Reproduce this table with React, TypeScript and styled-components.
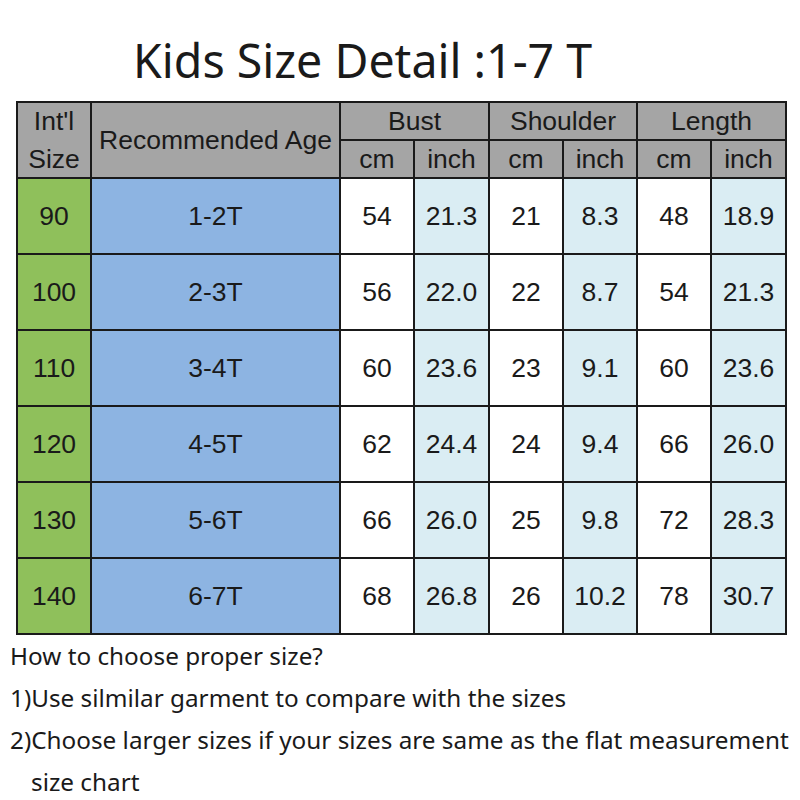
import React from "react";
import styled, { createGlobalStyle } from "styled-components";

const Global = createGlobalStyle`
  html, body { margin: 0; padding: 0; background: #fff; }
  body { width: 800px; height: 800px; overflow: hidden; }
`;

const Page = styled.div`
  width: 800px;
  height: 800px;
  display: flex;
  flex-direction: column;
  background: #fff;
  overflow: hidden;
`;

const Title = styled.h1`
  margin: 0;
  padding: 28px 0 0 133px;
  height: 101px;
  flex: 0 0 101px;
  box-sizing: border-box;
  font-family: "Noto Sans", "Open Sans", sans-serif;
  font-weight: 400;
  font-size: 46.5px;
  line-height: 64px;
  color: #1a1a1a;
  white-space: nowrap;
`;

const Table = styled.div`
  margin-left: 16px;
  width: 771px;
  flex: 0 0 auto;
  display: grid;
  grid-template-columns: 72px 247px 72px 73px 72px 72px 72px 73px;
  grid-template-rows: 36px 36px repeat(6, 74px);
  gap: 2px;
  padding: 2px;
  box-sizing: border-box;
  background: #1a1a1a;
  font-family: "Liberation Sans", Arial, sans-serif;
  font-size: 26.5px;
  color: #1a1a1a;
`;

type Tone = "head" | "size" | "age" | "plain" | "inch";

const tones: Record<Tone, string> = {
  head: "#a5a5a5",
  size: "#8fc05b",
  age: "#8db4e2",
  plain: "#ffffff",
  inch: "#daedf3",
};

const Cell = styled.div<{ $tone: Tone; $col?: string; $row?: string }>`
  background: ${(p) => tones[p.$tone]};
  grid-column: ${(p) => p.$col ?? "auto"};
  grid-row: ${(p) => p.$row ?? "auto"};
  display: flex;
  align-items: center;
  justify-content: center;
  text-align: center;
  line-height: 38px;
  white-space: nowrap;
`;

const Stack = styled.span`
  display: flex;
  flex-direction: column;
  align-items: center;
  line-height: 38px;
`;

const Notes = styled.div`
  padding: 0 0 0 10px;
  font-family: "Noto Sans", "Open Sans", sans-serif;
  font-size: 24.3px;
  line-height: 42px;
  color: #1a1a1a;
  white-space: nowrap;
`;

const Line = styled.div<{ $indent?: boolean }>`
  padding-left: ${(p) => (p.$indent ? "21px" : "0")};
`;

const rows = [
  ["90", "1-2T", "54", "21.3", "21", "8.3", "48", "18.9"],
  ["100", "2-3T", "56", "22.0", "22", "8.7", "54", "21.3"],
  ["110", "3-4T", "60", "23.6", "23", "9.1", "60", "23.6"],
  ["120", "4-5T", "62", "24.4", "24", "9.4", "66", "26.0"],
  ["130", "5-6T", "66", "26.0", "25", "9.8", "72", "28.3"],
  ["140", "6-7T", "68", "26.8", "26", "10.2", "78", "30.7"],
];

const dataTones: Tone[] = ["size", "age", "plain", "inch", "plain", "inch", "plain", "inch"];

export default function App() {
  return (
    <Page>
      <Global />
      <Title>Kids Size Detail :1-7 T</Title>
      <Table>
        <Cell $tone="head" $row="1 / span 2">
          <Stack>
            <span>Int'l</span>
            <span>Size</span>
          </Stack>
        </Cell>
        <Cell $tone="head" $row="1 / span 2">Recommended Age</Cell>
        <Cell $tone="head" $col="3 / span 2">Bust</Cell>
        <Cell $tone="head" $col="5 / span 2">Shoulder</Cell>
        <Cell $tone="head" $col="7 / span 2">Length</Cell>
        {["cm", "inch", "cm", "inch", "cm", "inch"].map((u, i) => (
          <Cell key={"u" + i} $tone="head">{u}</Cell>
        ))}
        {rows.map((r, ri) =>
          r.map((v, ci) => (
            <Cell key={ri + "-" + ci} $tone={dataTones[ci]}>
              {v}
            </Cell>
          ))
        )}
      </Table>
      <Notes>
        <Line>How to choose proper size?</Line>
        <Line>1)Use silmilar garment to compare with the sizes</Line>
        <Line>2)Choose larger sizes if your sizes are same as the flat measurement</Line>
        <Line $indent>size chart</Line>
      </Notes>
    </Page>
  );
}
